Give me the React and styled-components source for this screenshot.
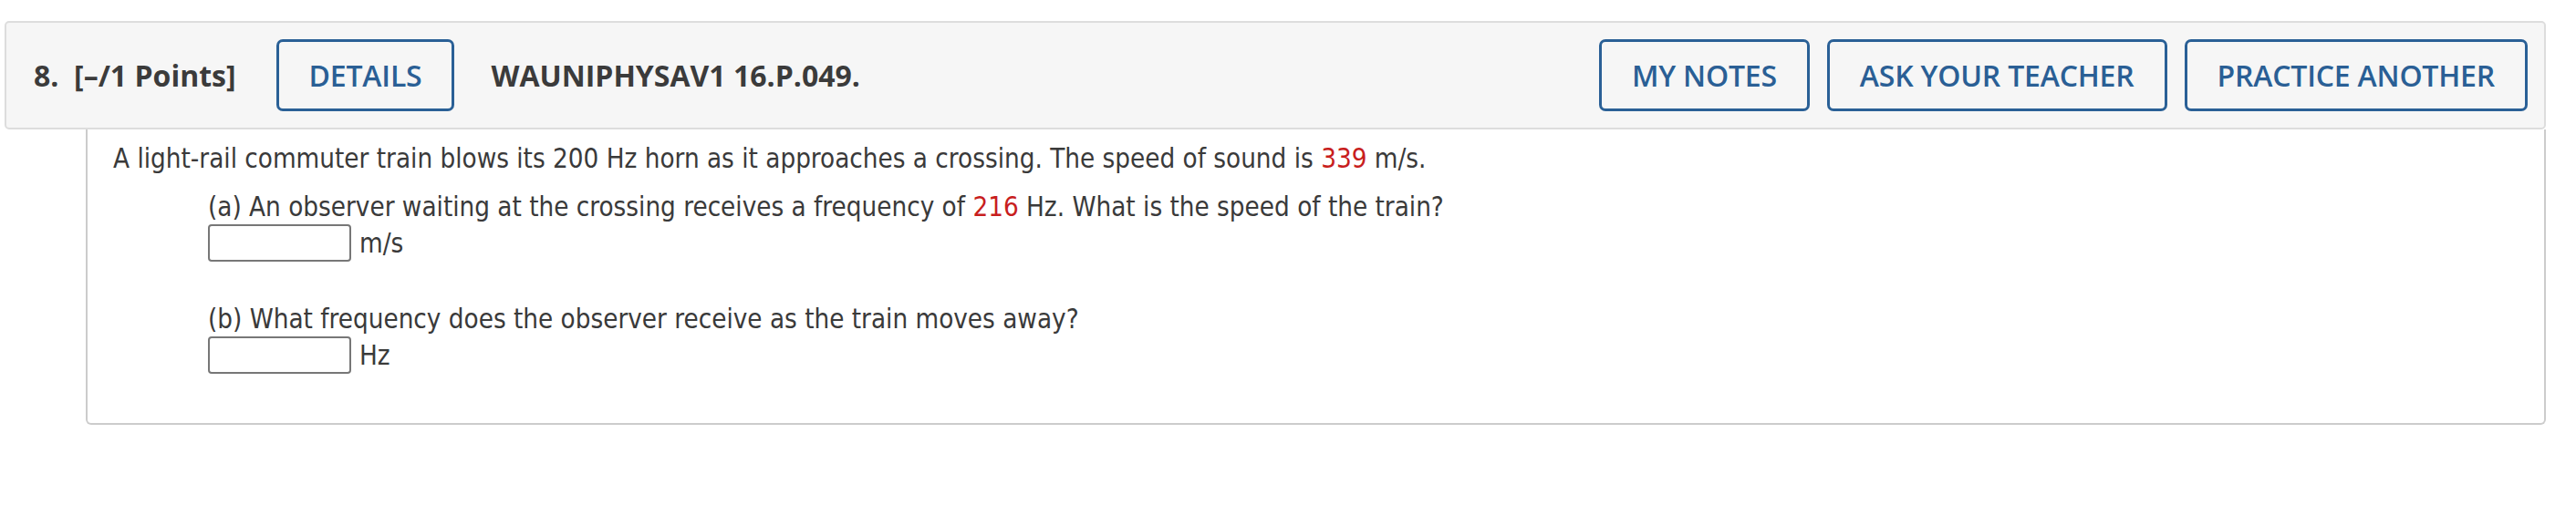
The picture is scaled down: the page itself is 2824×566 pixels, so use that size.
import React from "react";
import styled, { createGlobalStyle } from "styled-components";

const Global = createGlobalStyle`
  html, body { margin: 0; padding: 0; background: #ffffff; }
  body { width: 2824px; height: 566px; overflow: hidden; }
`;

const Page = styled.div`
  padding: 23px 33px 0 5px;
  box-sizing: border-box;
  width: 2824px;
`;

const Header = styled.div`
  display: flex;
  align-items: center;
  background: #f6f6f6;
  border: 2px solid #dddddd;
  border-radius: 5px;
  padding: 18px 18px 18px 30px;
  font-family: "Open Sans", "Liberation Sans", sans-serif;
  color: #3b3b3b;
`;

const Points = styled.div`
  font-size: 32px;
  font-weight: 700;
  white-space: pre;
  margin-right: 44px;
`;

const Title = styled.div`
  font-size: 32px;
  font-weight: 700;
  margin-left: 40px;
  flex: 1;
`;

const Actions = styled.div`
  display: flex;
  gap: 19px;
`;

const HeaderButton = styled.button`
  height: 79px;
  box-sizing: border-box;
  padding: 0 33px;
  background: transparent;
  border: 3px solid #2a6096;
  border-radius: 7px;
  color: #2a5f95;
  font-family: "Open Sans", "Liberation Sans", sans-serif;
  font-size: 32px;
  font-weight: 600;
  letter-spacing: -0.2px;
  cursor: pointer;
`;

const Content = styled.div`
  margin-left: 89px;
  border: 2px solid #cccccc;
  border-top: none;
  border-radius: 0 0 6px 6px;
  padding: 10px 28px 54px 28px;
  font-family: "DejaVu Sans Condensed", "DejaVu Sans", Verdana, sans-serif;
  font-stretch: semi-condensed;
  font-size: 29.3px;
  color: #3a3a3a;
`;

const Lead = styled.p`
  margin: 0;
  line-height: 45px;
`;

const Part = styled.div`
  margin: ${(p) => p.$top}px 0 0 104px;
`;

const Prompt = styled.p`
  margin: 0;
  line-height: 36px;
`;

const AnswerRow = styled.div`
  display: flex;
  align-items: center;
  gap: 9px;
  margin-top: 1px;
  line-height: 36px;
`;

const AnswerInput = styled.input`
  width: 157px;
  height: 41px;
  box-sizing: border-box;
  border: 2px solid #777777;
  border-radius: 4px;
  background: #ffffff;
  margin: 0;
  padding: 0 6px;
  font: inherit;
`;

const Num = styled.span`
  color: #c81e1e;
`;

export default function App() {
  return (
    <>
      <Global />
      <Page>
        <Header>
          <Points>{"8.  [–/1 Points]"}</Points>
          <HeaderButton>DETAILS</HeaderButton>
          <Title>WAUNIPHYSAV1 16.P.049.</Title>
          <Actions>
            <HeaderButton>MY NOTES</HeaderButton>
            <HeaderButton>ASK YOUR TEACHER</HeaderButton>
            <HeaderButton>PRACTICE ANOTHER</HeaderButton>
          </Actions>
        </Header>
        <Content>
          <Lead>
            A light-rail commuter train blows its 200 Hz horn as it approaches a crossing. The speed of sound is <Num>339</Num> m/s.
          </Lead>
          <Part $top={12}>
            <Prompt>
              (a) An observer waiting at the crossing receives a frequency of <Num>216</Num> Hz. What is the speed of the train?
            </Prompt>
            <AnswerRow>
              <AnswerInput type="text" />
              <span>m/s</span>
            </AnswerRow>
          </Part>
          <Part $top={45}>
            <Prompt>(b) What frequency does the observer receive as the train moves away?</Prompt>
            <AnswerRow>
              <AnswerInput type="text" />
              <span>Hz</span>
            </AnswerRow>
          </Part>
        </Content>
      </Page>
    </>
  );
}
